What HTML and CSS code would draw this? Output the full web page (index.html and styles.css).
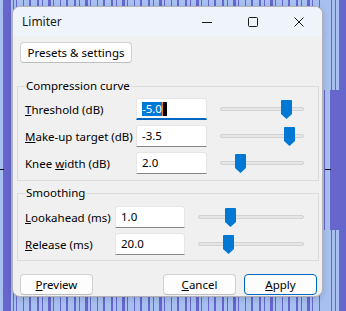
FILE: index.html
```html
<!DOCTYPE html>
<html>
<head>
<meta charset="utf-8">
<link rel="stylesheet" href="styles.css">
</head>
<body>
<div class="window">
  <div class="titlebar">
    <span class="title">Limiter</span>
    <div class="caption">
      <span class="cap-btn"><svg width="10" height="10" viewBox="0 0 10 10"><path d="M0 5.5H10" stroke="#1a1a1a" stroke-width="1"/></svg></span>
      <span class="cap-btn"><svg width="10" height="10" viewBox="0 0 10 10"><rect x="0.5" y="0.5" width="9" height="9" rx="1" fill="none" stroke="#1a1a1a" stroke-width="1"/></svg></span>
      <span class="cap-btn"><svg width="10" height="10" viewBox="0 0 10 10"><path d="M0.5 0.5L9.5 9.5M9.5 0.5L0.5 9.5" stroke="#1a1a1a" stroke-width="1"/></svg></span>
    </div>
  </div>
  <div class="content">
    <div class="top-row"><button class="btn presets">Presets &amp; settings</button></div>

    <fieldset class="group group-curve">
      <legend>Compression curve</legend>
      <div class="rows rows-curve">
        <label class="lbl"><u>T</u>hreshold (dB)</label>
        <div class="field focused"><span class="sel">-5.0</span><span class="caret"></span></div>
        <div class="slider"><div class="track"></div><svg class="thumb" style="left:61px" width="11" height="19" viewBox="0 0 11 19"><path d="M1 0H10Q11 0 11 1V14L5.5 19L0 14V1Q0 0 1 0Z" fill="#0078d4"/></svg></div>

        <label class="lbl"><u>M</u>ake-up target (dB)</label>
        <div class="field">-3.5</div>
        <div class="slider"><div class="track"></div><svg class="thumb" style="left:64px" width="11" height="19" viewBox="0 0 11 19"><path d="M1 0H10Q11 0 11 1V14L5.5 19L0 14V1Q0 0 1 0Z" fill="#0078d4"/></svg></div>

        <label class="lbl">Knee <u>w</u>idth (dB)</label>
        <div class="field">2.0</div>
        <div class="slider"><div class="track"></div><svg class="thumb" style="left:15px" width="11" height="19" viewBox="0 0 11 19"><path d="M1 0H10Q11 0 11 1V14L5.5 19L0 14V1Q0 0 1 0Z" fill="#0078d4"/></svg></div>
      </div>
    </fieldset>

    <fieldset class="group group-smooth">
      <legend>Smoothing</legend>
      <div class="rows rows-smooth">
        <label class="lbl"><u>L</u>ookahead (ms)</label>
        <div class="field">1.0</div>
        <div class="slider"><div class="track"></div><svg class="thumb" style="left:27px" width="11" height="19" viewBox="0 0 11 19"><path d="M1 0H10Q11 0 11 1V14L5.5 19L0 14V1Q0 0 1 0Z" fill="#0078d4"/></svg></div>

        <label class="lbl"><u>R</u>elease (ms)</label>
        <div class="field">20.0</div>
        <div class="slider"><div class="track"></div><svg class="thumb" style="left:25px" width="11" height="19" viewBox="0 0 11 19"><path d="M1 0H10Q11 0 11 1V14L5.5 19L0 14V1Q0 0 1 0Z" fill="#0078d4"/></svg></div>
      </div>
    </fieldset>

    <div class="footer">
      <button class="btn"><u>P</u>review</button>
      <div class="spacer"></div>
      <button class="btn"><u>C</u>ancel</button>
      <button class="btn primary"><u>A</u>pply</button>
    </div>
  </div>
</div>
</body>
</html>
```
FILE: styles.css
```css
html, body {
  margin: 0;
  padding: 0;
}
body {
  width: 346px;
  height: 311px;
  overflow: hidden;
  box-sizing: border-box;
  padding: 6px 0 0 12px;
  font-family: "Noto Sans", "Open Sans", sans-serif;
  font-size: 11.5px;
  color: #000;
  background:
    linear-gradient(#111, #111) 0 169px / 4px 1px no-repeat,
    linear-gradient(#111, #111) 325px 169px / 6px 1px no-repeat,
    linear-gradient(90deg, #a8c0f0 0 3px, #6666cc 3px 11px, #a8c0f0 11px) 0 0 / 13px 100% no-repeat,
    linear-gradient(90deg, #a8c0f0 0 1px, #6666cc 1px 2px, #a8c0f0 2px 7px, #6666cc 7px 23px) 323px 90px / 23px 140px no-repeat,
    linear-gradient(90deg, #a8c0f0 0 8px, #6666cc 8px 9px, #a8c0f0 9px 12px, #6666cc 12px 13px, #a8c0f0 13px 16px, #6666cc 16px 23px) 323px 0 / 23px 100% no-repeat,
    repeating-linear-gradient(90deg, #6666cc 0 2px, #a8c0f0 2px 5px, #6666cc 5px 6px, #a8c0f0 6px 11px, #6666cc 11px 14px, #a8c0f0 14px 16px, #6666cc 16px 17px, #a8c0f0 17px 23px, #6666cc 23px 24px, #a8c0f0 24px 29px, #6666cc 29px 31px, #a8c0f0 31px 37px),
    #a8c0f0;
}

.window {
  width: 311px;
  height: 291px;
  box-sizing: border-box;
  border: 1px solid rgba(60, 60, 90, 0.35);
  border-radius: 8px;
  overflow: hidden;
  background: #f0f0f0;
  display: flex;
  flex-direction: column;
  box-shadow: 0 2px 6px rgba(0, 0, 0, 0.15);
}

.titlebar {
  height: 29px;
  background: #eef4f9;
  display: flex;
  align-items: center;
  flex-shrink: 0;
  font-size: 12px;
}
.title {
  padding-left: 9px;
  flex: 1;
  color: #1a1a1a;
}
.caption {
  display: flex;
  height: 100%;
}
.cap-btn {
  width: 46px;
  display: flex;
  align-items: center;
  justify-content: center;
}

.content {
  flex: 1;
  padding: 0 3px 0 4px;
  display: flex;
  flex-direction: column;
}

.top-row {
  padding: 6px 0 0 3px;
}

.btn {
  font-family: inherit;
  font-size: 11.5px;
  color: #000;
  background: #fdfdfd;
  border: 1px solid #d0d0d0;
  border-bottom-color: #bdbdbd;
  border-radius: 4px;
  height: 21px;
  padding: 0;
  line-height: 17px;
}
.presets {
  width: 112px;
}
.primary {
  border-color: #0067c0;
}

.group {
  margin: 0;
  border: 1px solid #dcdcdc;
  border-radius: 0;
  padding: 4px 7px 6px 7px;
}
.group legend {
  padding: 0 1px;
  margin-left: 0;
  line-height: 16px;
}
.group-curve {
  margin-top: 15px;
}
.group-smooth {
  margin-top: 4px;
  padding-top: 5px;
  padding-bottom: 5px;
}

.rows {
  display: grid;
  row-gap: 5px;
  align-items: center;
}
.rows-curve {
  grid-template-columns: 111px 71px 97px;
}
.rows-smooth {
  grid-template-columns: 90px 70px 119px;
}
.slider { margin-left: 13px; }

.lbl {
  white-space: nowrap;
}

.field {
  height: 22px;
  box-sizing: border-box;
  background: #fff;
  border: 1px solid #e6e6e6;
  border-bottom: 1px solid #868686;
  border-radius: 3px 3px 0 0;
  padding: 0 0 0 5px;
  line-height: 20px;
  display: flex;
  align-items: center;
}
.field.focused {
  border-bottom: 2px solid #0067c0;
  padding-left: 5px;
}
.sel {
  background: #0078d7;
  color: #fff;
  line-height: 14px;
  height: 14px;
}
.caret {
  display: inline-block;
  width: 4px;
  height: 14px;
  background: #000;
  border-left: 1px solid #f08020;
}

.slider {
  position: relative;
  height: 22px;
}
.track {
  position: absolute;
  left: 0;
  right: 0;
  top: 9px;
  height: 4px;
  box-sizing: border-box;
  background: #e6e6e6;
  border: 1px solid #d2d2d2;
  border-radius: 2px;
}
.thumb {
  position: absolute;
  top: 2px;
}

.footer {
  display: flex;
  gap: 8px;
  margin-top: 13px;
  padding: 0 2px 0 3px;
}
.footer .btn {
  width: 73px;
}
.spacer {
  flex: 1;
}
```
